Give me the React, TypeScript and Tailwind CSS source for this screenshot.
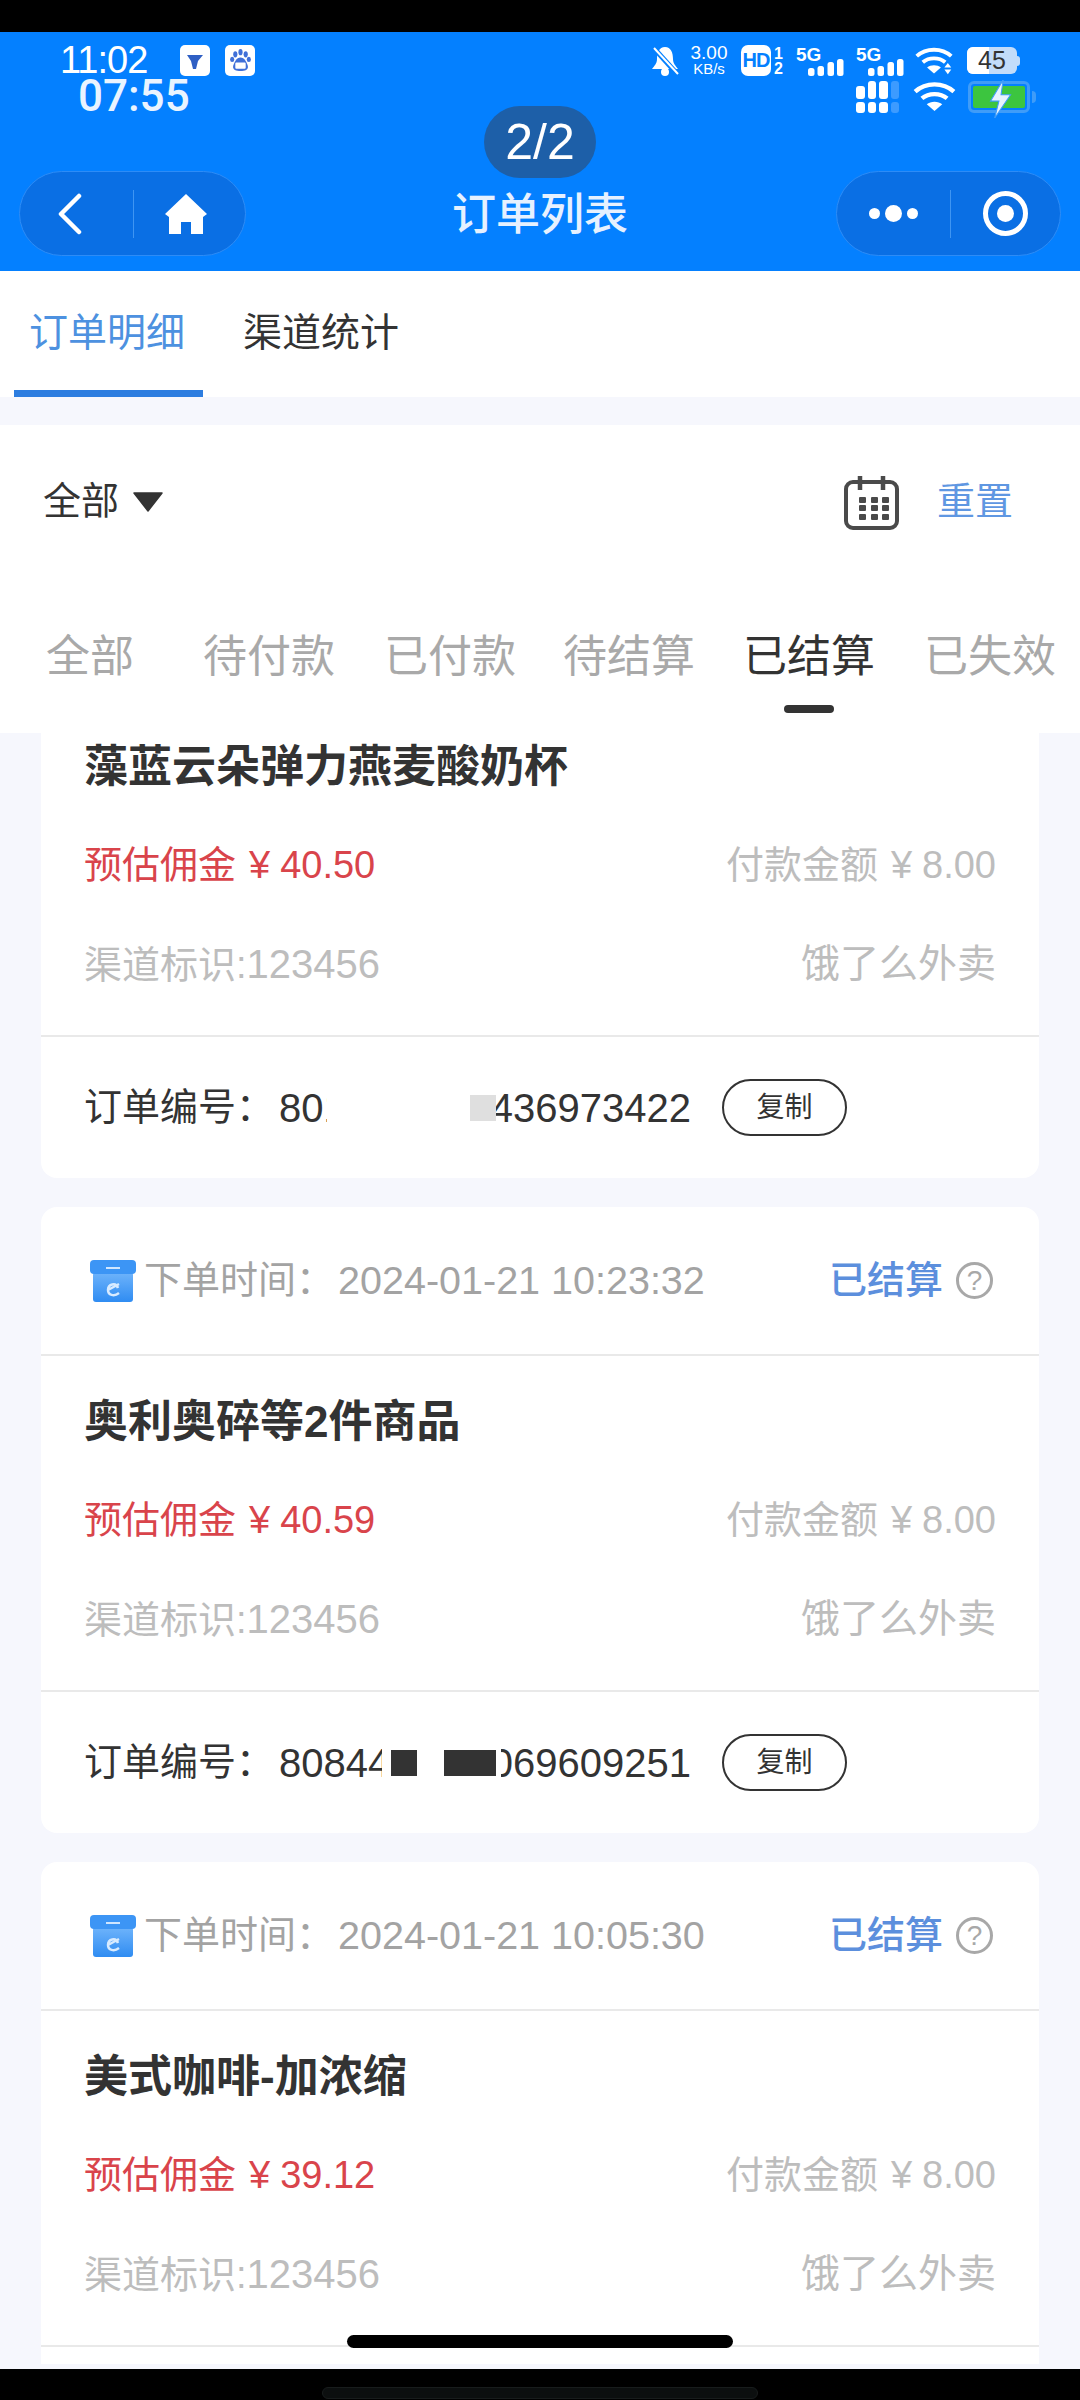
const FONT = "[font-family:'Liberation_Sans','Noto_Sans_CJK_SC',sans-serif]";

function Signal({ className }: { className?: string }) {
  return (
    <svg viewBox="0 0 36 17" className={className} fill="white">
      <rect x="0" y="9" width="6.500" height="8" rx="2.500" />
      <rect x="9.500" y="7" width="6.500" height="10" rx="2.500" />
      <rect x="19.500" y="3" width="6.500" height="14" rx="2.500" />
      <rect x="29" y="0" width="6.500" height="17" rx="2.500" />
    </svg>
  );
}

function Wifi({ className, arrows }: { className?: string; arrows?: boolean }) {
  return (
    <svg viewBox="0 0 44 32" className={className} fill="none" stroke="white" strokeWidth="4.500">
      <path d="M2 11C13 1 31 1 42 11" />
      <path d="M9 18C16 12 28 12 35 18" />
      <path d="M22 31L14 24C18 20.500 26 20.500 30 24Z" fill="white" stroke="none" />
      {arrows && (
        <g fill="white" stroke="none">
          <path d="M38 19L42 24H34Z" />
          <path d="M38 32L42 26.500H34Z" />
        </g>
      )}
    </svg>
  );
}

function StatusBar() {
  return (
    <div className="flex flex-col">
      {/* top status row */}
      <div className="flex items-center justify-between h-[31px] mt-[13px] pl-[60px] pr-[60px] text-white">
        <div className="flex items-center">
          <span className="text-[38px] leading-[31px] tracking-[-1px] w-[120px]">11:02</span>
          <div className="w-[30px] h-[31px] rounded-[5px] bg-white flex items-center justify-center">
            <svg viewBox="0 0 20 20" className="w-[20px] h-[20px]">
              <path d="M2 4H18L13 10L11 18H8L6 10Z" fill="#2f5fc4" />
            </svg>
          </div>
          <div className="w-[30px] h-[31px] rounded-[5px] bg-white flex items-center justify-center ml-[15px]">
            <svg viewBox="0 0 24 24" className="w-[25px] h-[25px]" fill="#3f6fd8">
              <ellipse cx="7" cy="6" rx="2" ry="3" />
              <ellipse cx="12" cy="4" rx="2" ry="3" />
              <ellipse cx="17" cy="6" rx="2" ry="3" />
              <ellipse cx="4" cy="11" rx="2" ry="2.500" />
              <ellipse cx="20" cy="11" rx="2" ry="2.500" />
              <path d="M12 9C8 9 6 14 5 17C4 21 8 22 12 22C16 22 20 21 19 17C18 14 16 9 12 9Z" />
              <rect x="7" y="14" width="10" height="6" fill="white" rx="1" />
            </svg>
          </div>
        </div>
        <div className="flex items-center">
          <svg viewBox="0 0 28 31" className="w-[28px] h-[31px]" fill="white">
            <path d="M14 2C8 2 6 8 6 14C6 19 3 21 1 24H27C25 21 22 19 22 14C22 8 20 2 14 2Z" />
            <circle cx="14" cy="27" r="4" />
            <path d="M1 1L27 30" stroke="#0480ff" strokeWidth="5" />
            <path d="M3 3L27 29" stroke="white" strokeWidth="2" />
          </svg>
          <div className="flex flex-col items-center ml-[11px] w-[38px]">
            <span className="text-[19px] leading-[16px]">3.00</span>
            <span className="text-[15px] leading-[15px]">KB/s</span>
          </div>
          <div className="w-[30px] h-[31px] ml-[13px] rounded-[7px] bg-white text-[#0480ff] text-[20px] font-bold leading-[31px] text-center tracking-[-1px]">
            HD
          </div>
          <div className="flex flex-col items-center ml-[2px] w-[11px] text-[16px] font-bold leading-[15px]">
            <span>1</span>
            <span>2</span>
          </div>
          <div className="relative w-[48px] h-[31px] ml-[12px]">
            <span className="absolute left-0 top-0 text-[19px] font-bold leading-none">5G</span>
            <Signal className="absolute right-0 bottom-0 w-[36px] h-[17px]" />
          </div>
          <div className="relative w-[48px] h-[31px] ml-[12px]">
            <span className="absolute left-0 top-0 text-[19px] font-bold leading-none">5G</span>
            <Signal className="absolute right-0 bottom-0 w-[36px] h-[17px]" />
          </div>
          <Wifi arrows className="w-[38px] h-[29px] ml-[11px]" />
          <div className="flex items-center ml-[14px]">
            <div className="relative w-[50px] h-[27px] rounded-[6px] bg-[#c2dcfa] overflow-hidden">
              <div className="absolute inset-y-0 left-0 w-[22px] bg-white" />
              <span className="relative block text-center text-[25px] leading-[27px] text-[#333]">45</span>
            </div>
            <div className="w-[3px] h-[10px] bg-[#c2dcfa] rounded-r-sm" />
          </div>
        </div>
      </div>
      {/* second status row from the screenshot within the screenshot */}
      <div className="flex items-center justify-between h-[35px] mt-[3px] pl-[78px] pr-[44px] text-white">
        <span className="text-[44px] leading-[35px] font-medium text-[#eaf4ff] [font-family:Roboto,sans-serif]">07:55</span>
        <div className="flex items-center">
          <div className="grid grid-cols-4 gap-[3px] w-[43px]">
            <div className="h-[13px] mt-[5px] rounded-[3px] bg-white" />
            <div className="h-[18px] rounded-[3px] bg-white" />
            <div className="h-[18px] rounded-[3px] bg-white" />
            <div className="h-[18px] rounded-[3px] bg-[#3d9bff]" />
            <div className="h-[11px] rounded-[3px] bg-white" />
            <div className="h-[11px] rounded-[3px] bg-white" />
            <div className="h-[11px] rounded-[3px] bg-white" />
            <div className="h-[11px] rounded-[3px] bg-[#3d9bff]" />
          </div>
          <Wifi className="w-[43px] h-[31px] ml-[14px]" />
          <div className="flex items-center ml-[12px]">
            <div className="relative w-[62px] h-[32px] rounded-[6px] border-[3px] border-[#3f9cf8] p-[2px]">
              <div className="w-full h-full bg-[#3cc53f] rounded-[2px]" />
              <svg viewBox="0 0 24 36" className="absolute left-[16px] -top-[4px] w-[26px] h-[38px]" fill="#e8f3ff" stroke="#3f9cf8" strokeWidth="1">
                <path d="M15 0L3 20H11L7 36L22 14H13Z" />
              </svg>
            </div>
            <div className="w-[4px] h-[12px] ml-[2px] bg-[#3f9cf8] rounded-r-sm" />
          </div>
        </div>
      </div>
    </div>
  );
}

function NavBar() {
  return (
    <div className="relative flex items-center justify-between h-[85px] mt-[57px] px-[19px]">
      {/* page counter sits across the nav row */}
      <div className="absolute left-[484px] -top-[65px] w-[112px] h-[72px] rounded-full bg-[#1d5fa8] text-white text-[50px] leading-[72px] text-center">
        2/2
      </div>
      <div className="flex items-center w-[227px] h-[85px] rounded-full bg-[#0a6fe4] border border-[#2e8cf6]">
        <div className="w-[113px] flex justify-center">
          <svg viewBox="0 0 24 42" className="w-[24px] h-[42px] mr-[14px]" fill="none" stroke="white" strokeWidth="4.500" strokeLinecap="round" strokeLinejoin="round">
            <path d="M21 3L3 21L21 39" />
          </svg>
        </div>
        <div className="w-px h-[48px] bg-[#3f95f2]" />
        <div className="flex-1 flex justify-center">
          <svg viewBox="0 0 42 40" className="w-[42px] h-[40px] mr-[8px]" fill="white">
            <path d="M21 0L42 20L38 23V40H26V28H16V40H4V23L0 20Z" />
          </svg>
        </div>
      </div>
      <span className="absolute left-[440px] top-[12px] w-[200px] text-center whitespace-nowrap text-[44px] leading-[64px] text-[#e6f1ff] font-medium">
        订单列表
      </span>
      <div className="flex items-center w-[225px] h-[85px] rounded-full bg-[#0a6fe4] border border-[#2e8cf6]">
        <div className="w-[113px] flex justify-center items-center gap-[5px]">
          <div className="w-[11px] h-[11px] rounded-full bg-white" />
          <div className="w-[17px] h-[17px] rounded-full bg-white" />
          <div className="w-[11px] h-[11px] rounded-full bg-white" />
        </div>
        <div className="w-px h-[48px] bg-[#3f95f2]" />
        <div className="flex-1 flex justify-center">
          <div className="w-[45px] h-[45px] rounded-full border-[5px] border-white flex items-center justify-center">
            <div className="w-[17px] h-[17px] rounded-full bg-white" />
          </div>
        </div>
      </div>
    </div>
  );
}

function CalendarIcon() {
  const cols = [15, 27, 38];
  const rows = [21, 29, 38];
  return (
    <svg viewBox="0 0 55 54" className="w-[55px] h-[54px] ml-auto mt-[3px]" fill="none" stroke="#4a4a4a">
      <rect x="2" y="6" width="51" height="46" rx="7" strokeWidth="4" />
      <path d="M16 0V14M39 0V14" strokeWidth="4.500" />
      <g fill="#4a4a4a" stroke="none">
        {rows.map((y) =>
          cols.map((x) => <rect key={`${x}-${y}`} x={x} y={y} width="7" height="6" rx="1" />)
        )}
      </g>
    </svg>
  );
}

function FilterArea() {
  return (
    <div className="bg-white flex flex-col h-[308px]">
      <div className="flex items-center h-[153px] pl-[43px] pr-[67px]">
        <span className="text-[38px] text-[#333]">全部</span>
        <svg viewBox="0 0 30 20" className="w-[30px] h-[20px] ml-[14px]" fill="#333" stroke="#333" strokeWidth="1.500" strokeLinejoin="round">
          <path d="M1 1H29L15 19Z" />
        </svg>
        <CalendarIcon />
        <span className="text-[38px] text-[#5f97e2] ml-[38px]">重置</span>
      </div>
      <div className="flex pl-[46px] pt-[48px] text-[44px] leading-[62px] text-[#a9a9a9]">
        <span className="w-[157px]">全部</span>
        <span className="w-[181px]">待付款</span>
        <span className="w-[179px]">已付款</span>
        <span className="w-[180px]">待结算</span>
        <div className="w-[181px] flex flex-col text-[#333]">
          <span>已结算</span>
          <div className="w-[50px] h-[8px] rounded-full bg-[#333] ml-[41px] mt-[17px]" />
        </div>
        <span>已失效</span>
      </div>
    </div>
  );
}

function BoxIcon() {
  return (
    <svg viewBox="0 0 46 42" className="w-[46px] h-[42px]">
      <defs>
        <linearGradient id="box" x1="0" y1="0" x2="0" y2="1">
          <stop offset="0" stopColor="#6fb4fb" />
          <stop offset="1" stopColor="#2f8cf2" />
        </linearGradient>
      </defs>
      <rect x="3" y="12" width="40" height="30" rx="3" fill="url(#box)" />
      <rect x="0" y="0" width="46" height="14" rx="4" fill="#3c95f5" />
      <path d="M16 8H30" stroke="#cfe6ff" strokeWidth="2" />
      <path d="M28 28C26 22 18 24 18 30C18 35 24 37 29 33M18 30L29 24" fill="none" stroke="#d8ebff" strokeWidth="2.500" />
    </svg>
  );
}

type Order = {
  time?: string;
  title: string;
  commission: string;
  orderNo?: React.ReactNode;
  first?: boolean;
};

function OrderCard({ time, title, commission, orderNo, first }: Order) {
  return (
    <div className={`bg-white rounded-[16px] shrink-0 ${first ? "-mt-[32px]" : "mt-[29px]"}`}>
      {time && (
        <div className="flex items-center h-[149px] pl-[49px] pr-[46px] border-b-2 border-[#e9e9e9]">
          <BoxIcon />
          <span className="text-[38px] text-[#a3a3a3] ml-[8px]">下单时间：</span>
          <span className="text-[39.500px] text-[#a3a3a3] ml-[4px]">{time}</span>
          <span className="text-[38px] text-[#5c8fdd] font-medium ml-auto">已结算</span>
          <div className="w-[37px] h-[37px] ml-[13px] rounded-full border-[3px] border-[#a8a8a8] text-[#a8a8a8] text-[28px] leading-[31px] text-center">
            ?
          </div>
        </div>
      )}
      <div className="flex flex-col h-[336px] px-[43px] pt-[32px] border-b-2 border-[#e9e9e9]">
        <div className="text-[44px] leading-[68px] font-bold text-[#333]">{title}</div>
        <div className="flex justify-between items-center mt-[30px] h-[68px] text-[38px]">
          <span className="flex items-center text-[#d9444b]">
            预估佣金
            <span className="ml-[13px]">¥</span>
            <span className="ml-[10px]">{commission}</span>
          </span>
          <span className="flex items-center text-[#bdbdbd]">
            付款金额
            <span className="ml-[13px]">¥</span>
            <span className="ml-[10px]">8.00</span>
          </span>
        </div>
        <div className="flex justify-between items-center mt-[31px] h-[68px] text-[38px] text-[#bdbdbd]">
          <span>
            渠道标识:<span className="text-[40px]">123456</span>
          </span>
          <span className="text-[39px]">饿了么外卖</span>
        </div>
      </div>
      {orderNo && (
        <div className="flex items-center h-[141px] pl-[43px] text-[#333]">
          <span className="text-[38px] w-[195px]">订单编号：</span>
          <div className="flex items-center w-[412px] text-[40px]">{orderNo}</div>
          <div className="ml-[31px] w-[125px] h-[57px] rounded-full border-2 border-[#333] text-[28px] leading-[53px] text-center">
            复制
          </div>
        </div>
      )}
    </div>
  );
}

export default function App() {
  return (
    <div className={`relative w-[1080px] h-[2400px] overflow-hidden bg-black flex flex-col ${FONT}`}>
      <div className="h-[32px] shrink-0 bg-black" />
      <div className="h-[239px] shrink-0 bg-[#0480ff]">
        <StatusBar />
        <NavBar />
      </div>

      {/* top tabs */}
      <div className="h-[126px] shrink-0 bg-white flex items-end pl-[14px]">
        <div className="w-[189px] h-full flex flex-col items-center justify-end border-b-[7px] border-[#2d7de0]">
          <span className="text-[39px] leading-[56px] text-[#4d91e0] mb-[29px] mr-[3px]">订单明细</span>
        </div>
        <span className="text-[39px] leading-[56px] text-[#333] ml-[40px] mb-[36px]">渠道统计</span>
      </div>
      <div className="h-[28px] shrink-0 bg-[#f6f7fd]" />

      <FilterArea />

      {/* order list */}
      <div className="flex-1 min-h-0 overflow-hidden bg-[#f6f7fd] px-[41px] flex flex-col">
        <OrderCard
          first
          title="藻蓝云朵弹力燕麦酸奶杯"
          commission="40.50"
          orderNo={
            <>
              <span className="w-[48px] overflow-hidden">801</span>
              <span className="w-[143px]" />
              <span className="w-[26px] h-[26px] bg-[#dfdfdf]" />
              <span className="w-[195px] flex justify-end overflow-hidden">436973422</span>
            </>
          }
        />
        <OrderCard
          time="2024-01-21 10:23:32"
          title="奥利奥碎等2件商品"
          commission="40.59"
          orderNo={
            <>
              <span className="w-[103px] overflow-hidden">80844</span>
              <span className="w-[26px] h-[26px] ml-[9px] bg-[#333]" />
              <span className="w-[52px] h-[26px] ml-[27px] bg-[#333]" />
              <span className="w-[190px] ml-[5px] flex justify-end overflow-hidden">069609251</span>
            </>
          }
        />
        <OrderCard time="2024-01-21 10:05:30" title="美式咖啡-加浓缩" commission="39.12" orderNo={<></>} />
      </div>
      <div className="h-[5px] shrink-0 bg-[#f6f7fd]" />

      <div className="absolute left-[347px] top-[2335px] w-[386px] h-[13px] rounded-full bg-black" />

      <div className="h-[31px] shrink-0 bg-black flex justify-center items-end">
        <div className="w-[436px] h-[12px] mb-[1px] rounded-full bg-[#0c0f0f] border border-[#181c1c]" />
      </div>
    </div>
  );
}
